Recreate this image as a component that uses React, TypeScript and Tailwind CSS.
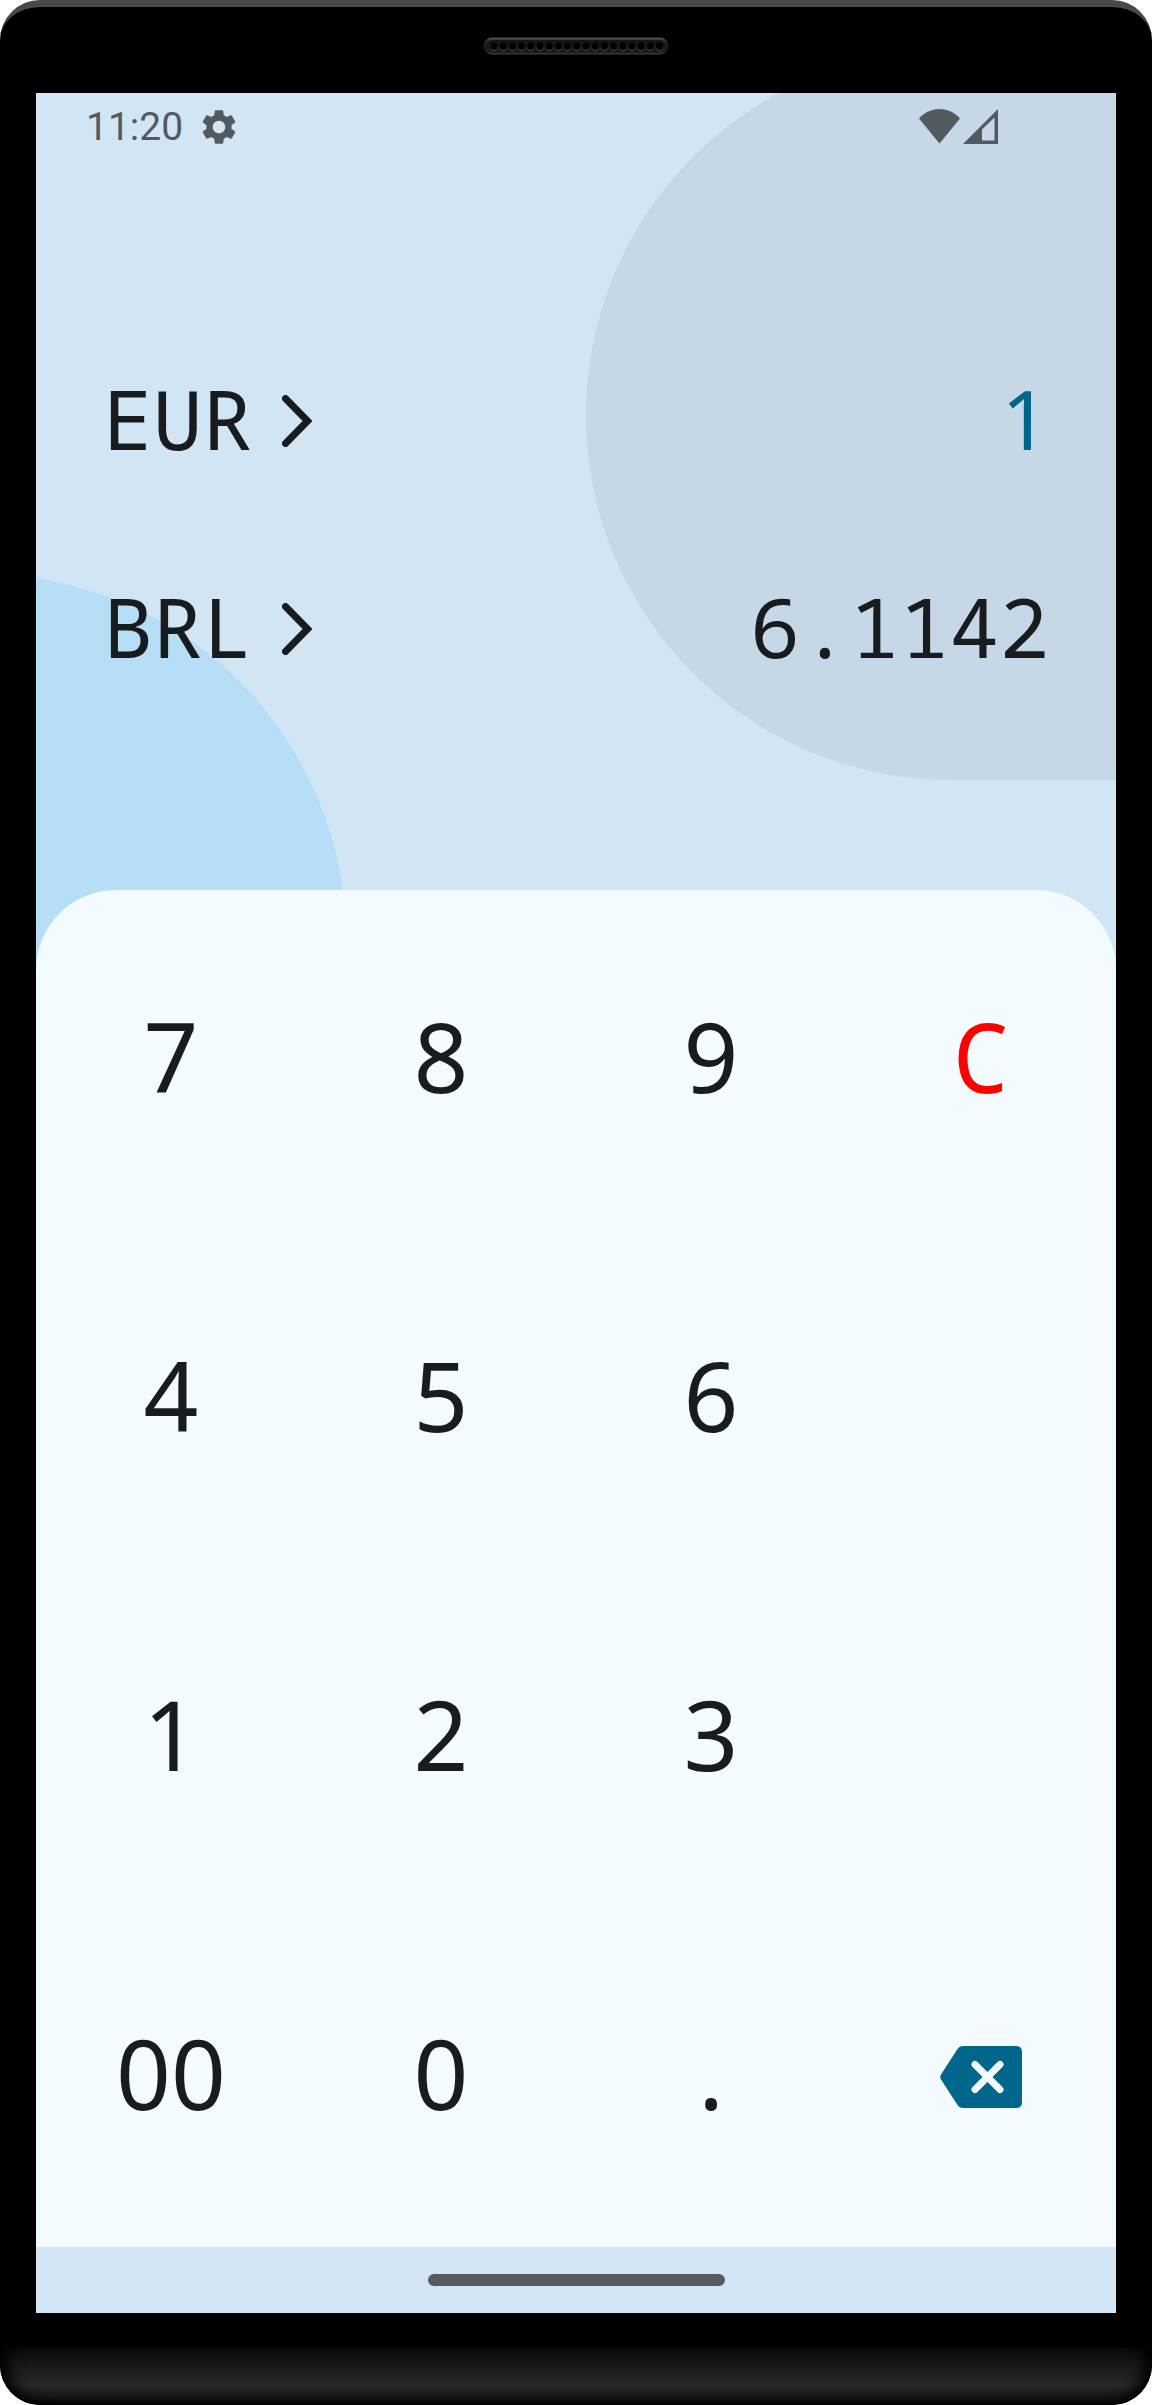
import { useState } from "react";

const speakerHoles = Array.from({ length: 19 }, (_, i) => 11 + i * 9.2);

function SpeakerGrille() {
  return (
    <svg width="186" height="18" viewBox="0 0 186 18" aria-hidden="true">
      <defs>
        <linearGradient id="grille-rim" x1="0" y1="0" x2="0" y2="1">
          <stop offset="0" stopColor="#525252" />
          <stop offset="0.3" stopColor="#222222" />
          <stop offset="0.7" stopColor="#161616" />
          <stop offset="1" stopColor="#3c3c3c" />
        </linearGradient>
      </defs>
      <rect x="0.5" y="0.5" width="185" height="17" rx="8.5" fill="url(#grille-rim)" />
      <rect x="3" y="3" width="180" height="12.5" rx="6.2" fill="#161616" />
      {speakerHoles.map((x) => (
        <g key={x}>
          <circle cx={x} cy="10" r="3.9" fill="#4a4a4a" />
          <circle cx={x} cy="9.2" r="3.7" fill="#000000" />
        </g>
      ))}
    </svg>
  );
}

function GearIcon() {
  return (
    <svg width="42" height="42" viewBox="0 0 24 24" fill="currentColor" aria-hidden="true">
      <path d="M19.14 12.94c.04-.3.06-.61.06-.94 0-.32-.02-.64-.07-.94l2.03-1.58a.49.49 0 0 0 .12-.61l-1.92-3.32a.488.488 0 0 0-.59-.22l-2.39.96c-.5-.38-1.03-.7-1.62-.94l-.36-2.54a.484.484 0 0 0-.48-.41h-3.84c-.24 0-.43.17-.47.41l-.36 2.54c-.59.24-1.13.57-1.62.94l-2.39-.96c-.22-.08-.47 0-.59.22L2.74 8.87c-.12.21-.08.47.12.61l2.03 1.58c-.05.3-.09.63-.09.94s.02.64.07.94l-2.03 1.58a.49.49 0 0 0-.12.61l1.92 3.32c.12.22.37.29.59.22l2.39-.96c.5.38 1.03.7 1.62.94l.36 2.54c.05.24.24.41.48.41h3.84c.24 0 .44-.17.47-.41l.36-2.54c.59-.24 1.13-.56 1.62-.94l2.39.96c.22.08.47 0 .59-.22l1.92-3.32c.12-.22.07-.47-.12-.61l-2.01-1.58zM12 15.6c-1.98 0-3.6-1.62-3.6-3.6s1.62-3.6 3.6-3.6 3.6 1.62 3.6 3.6-1.62 3.6-3.6 3.6z" />
    </svg>
  );
}

function WifiIcon() {
  return (
    <svg width="41" height="35" viewBox="0 0 41 35" fill="currentColor" aria-hidden="true">
      <path d="M0 9.500C5.500 3.500 12.500 0 20.500 0S35.500 3.500 41 9.500L20.500 34.500Z" />
    </svg>
  );
}

function SignalIcon() {
  return (
    <svg width="35" height="35" viewBox="0 0 35 35" fill="currentColor" fillRule="evenodd" aria-hidden="true">
      <path d="M35 0V35H0ZM31.500 8.500L19 20.500V31.500H31.500Z" />
    </svg>
  );
}

function ChevronIcon() {
  return (
    <svg width="30" height="52" viewBox="0 0 30 52" fill="none" stroke="currentColor" strokeWidth="7" strokeLinecap="round" strokeLinejoin="miter" aria-hidden="true">
      <path d="M3.500 3.500L25.500 26L3.500 48.500" />
    </svg>
  );
}

function BackspaceIcon() {
  return (
    <svg width="82" height="62" viewBox="0 0 82 62" aria-hidden="true">
      <path
        d="M23 0H76Q82 0 82 6V56Q82 62 76 62H23Q19.500 62 17.500 59L1 33.500Q-0.500 31 1 28.500L17.500 3Q19.500 0 23 0Z"
        fill="currentColor"
      />
      <path d="M35 18.500L60 43.500M60 18.500L35 43.500" stroke="#f3fbff" strokeWidth="7" strokeLinecap="round" />
    </svg>
  );
}

function CurrencyRow({ code, children }: { code: string; children: React.ReactNode }) {
  return (
    <div className="flex h-52 items-center justify-between">
      <button type="button" aria-label={`Change currency ${code}`} className="flex items-center gap-[30px]">
        <span className="pb-2 font-['Noto_Sans_Mono','DejaVu_Sans_Mono',monospace]">{code}</span>
        <ChevronIcon />
      </button>
      {children}
    </div>
  );
}

const keys = ["7", "8", "9", "C", "4", "5", "6", "", "1", "2", "3", "", "00", "0", ".", "back"];

export default function App() {
  const [amount, setAmount] = useState("1");
  const converted = String(Number((Number(amount) * 6.1142).toFixed(4)));

  const press = (key: string) => {
    if (key === "C") setAmount("0");
    else if (key === "back") setAmount((a) => a.slice(0, -1) || "0");
    else if (key === ".") setAmount((a) => (a.includes(".") ? a : a + "."));
    else setAmount((a) => (a === "0" ? String(Number(key)) : a + key));
  };

  return (
    <div className="min-h-screen bg-white">
      <div className="relative flex min-h-screen flex-col overflow-hidden rounded-[40px] border-t-[7px] border-[#484848] bg-black px-9">
        <div className="flex h-[86px] shrink-0 justify-center pt-[30px]">
          <SpeakerGrille />
        </div>

        <main className="relative flex flex-1 flex-col overflow-hidden bg-[#d2e5f4] text-[#181c1f]">
          <div className="absolute top-[-43px] right-0 h-[730px] w-[530px] rounded-l-full bg-[#c6d7e7]" />
          <div className="absolute top-[481px] left-[-420px] size-[730px] rounded-full bg-[#b6def7]" />

          <header className="relative flex h-[67px] items-center justify-between pr-[118px] pl-[50px] text-[#525a60]">
            <div className="flex items-center gap-[15px]">
              <time className="pt-px font-[Roboto,sans-serif] text-[39px] leading-none">11:20</time>
              <GearIcon />
            </div>
            <div className="flex items-center gap-[3px] pb-px">
              <WifiIcon />
              <SignalIcon />
            </div>
          </header>

          <section aria-label="Conversion" className="relative px-[67px] pt-[157px] pb-[157px] text-[83px] leading-none">
            <CurrencyRow code="EUR">
              <output className="pb-2 font-['Noto_Sans','Open_Sans',sans-serif] text-[#00668b]">{amount}</output>
            </CurrencyRow>
            <CurrencyRow code="BRL">
              <output className="pb-2 font-['Noto_Sans_Mono','DejaVu_Sans_Mono',monospace]">{converted}</output>
            </CurrencyRow>
          </section>

          <section
            aria-label="Keypad"
            className="relative grid flex-1 grid-cols-4 grid-rows-4 rounded-t-[80px] bg-[#f3fbff] font-['Noto_Sans','Open_Sans',sans-serif] text-8xl"
          >
            {keys.map((key, i) =>
              key === "" ? (
                <span key={i} />
              ) : (
                <button
                  key={i}
                  type="button"
                  onClick={() => press(key)}
                  aria-label={key === "back" ? "Backspace" : undefined}
                  className={
                    key === "C"
                      ? "flex items-center justify-center pb-2 font-['Noto_Sans_Mono','DejaVu_Sans_Mono',monospace] text-[#ff0000]"
                      : key === "back"
                        ? "flex items-center justify-center text-[#00668b]"
                        : "flex items-center justify-center pb-2"
                  }
                >
                  {key === "back" ? <BackspaceIcon /> : key}
                </button>
              ),
            )}
          </section>

          <footer className="relative flex h-[66px] items-center justify-center bg-[#d2e5f4]">
            <div className="h-3 w-[297px] rounded-full bg-[#545c62]" />
          </footer>
        </main>

        <div className="-mx-9 h-[92px] shrink-0 pt-[34px]">
          <div className="h-full rounded-b-[40px] bg-linear-to-b from-[#0b0b0b] via-[#282828] via-65% to-[#101010] shadow-[inset_14px_0_16px_-6px_#000,inset_-14px_0_16px_-6px_#000,inset_0_-6px_10px_-4px_#000]" />
        </div>
      </div>
    </div>
  );
}
